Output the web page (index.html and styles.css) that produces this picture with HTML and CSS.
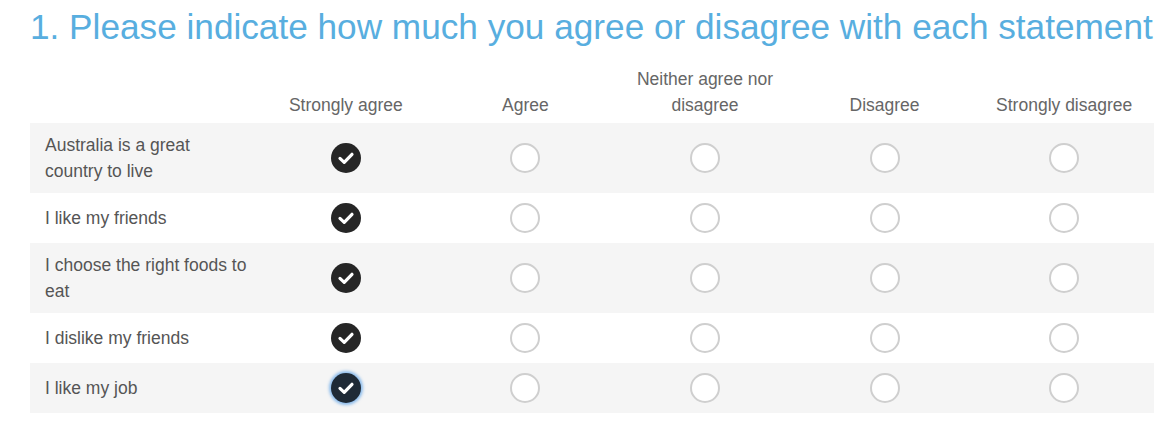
FILE: index.html
```html
<!DOCTYPE html>
<html>
<head>
<meta charset="utf-8">
<link rel="stylesheet" href="styles.css">
</head>
<body>
<div class="page">
  <h1 class="title">1. Please indicate how much you agree or disagree with each statement</h1>
  <table class="matrix">
    <colgroup>
      <col class="col-label">
      <col><col><col><col><col>
    </colgroup>
    <thead>
      <tr>
        <th></th>
        <th>Strongly agree</th>
        <th>Agree</th>
        <th>Neither agree nor disagree</th>
        <th>Disagree</th>
        <th>Strongly disagree</th>
      </tr>
    </thead>
    <tbody>
      <tr class="alt">
        <td class="label">Australia is a great country to live</td>
        <td><span class="radio checked"><svg viewBox="0 0 30 30"><path d="M9 15.4l4.2 3.9 7.8-8"/></svg></span></td>
        <td><span class="radio"></span></td>
        <td><span class="radio"></span></td>
        <td><span class="radio"></span></td>
        <td><span class="radio"></span></td>
      </tr>
      <tr>
        <td class="label">I like my friends</td>
        <td><span class="radio checked"><svg viewBox="0 0 30 30"><path d="M9 15.4l4.2 3.9 7.8-8"/></svg></span></td>
        <td><span class="radio"></span></td>
        <td><span class="radio"></span></td>
        <td><span class="radio"></span></td>
        <td><span class="radio"></span></td>
      </tr>
      <tr class="alt">
        <td class="label">I choose the right foods to eat</td>
        <td><span class="radio checked"><svg viewBox="0 0 30 30"><path d="M9 15.4l4.2 3.9 7.8-8"/></svg></span></td>
        <td><span class="radio"></span></td>
        <td><span class="radio"></span></td>
        <td><span class="radio"></span></td>
        <td><span class="radio"></span></td>
      </tr>
      <tr>
        <td class="label">I dislike my friends</td>
        <td><span class="radio checked"><svg viewBox="0 0 30 30"><path d="M9 15.4l4.2 3.9 7.8-8"/></svg></span></td>
        <td><span class="radio"></span></td>
        <td><span class="radio"></span></td>
        <td><span class="radio"></span></td>
        <td><span class="radio"></span></td>
      </tr>
      <tr class="alt">
        <td class="label">I like my job</td>
        <td><span class="radio checked focused"><svg viewBox="0 0 30 30"><path d="M9 15.4l4.2 3.9 7.8-8"/></svg></span></td>
        <td><span class="radio"></span></td>
        <td><span class="radio"></span></td>
        <td><span class="radio"></span></td>
        <td><span class="radio"></span></td>
      </tr>
    </tbody>
  </table>
</div>
</body>
</html>
```

FILE: styles.css
```css
html, body {
  margin: 0;
  padding: 0;
  background: #ffffff;
}

body {
  font-family: "Liberation Sans", Arial, sans-serif;
}

.page {
  padding: 0 14px 0 30px;
}

.title {
  margin: 6px 0 0 0;
  font-size: 35.2px;
  line-height: 41px;
  font-weight: normal;
  color: #58aedf;
  white-space: nowrap;
}

.matrix {
  width: 1124px;
  table-layout: fixed;
  border-collapse: collapse;
  border-spacing: 0;
}

.col-label {
  width: 226px;
}

.matrix th {
  font-weight: normal;
  font-size: 17.5px;
  line-height: 26px;
  color: #666666;
  text-align: center;
  vertical-align: bottom;
  padding: 19px 12px 5px;
}

.matrix td {
  padding: 10px 0;
  text-align: center;
  vertical-align: middle;
  height: 30px;
}

.matrix td.label {
  text-align: left;
  padding: 9px 7px 9px 15px;
  font-size: 17.5px;
  line-height: 26px;
  color: #555555;
}

.matrix tr.alt td {
  background: #f5f5f5;
}

.radio {
  display: inline-block;
  box-sizing: border-box;
  width: 30px;
  height: 30px;
  border-radius: 50%;
  border: 2px solid #cfcfcf;
  background: #ffffff;
  vertical-align: middle;
}

.radio.checked {
  border: none;
  background: #262626;
}

.radio.checked svg {
  display: block;
  width: 30px;
  height: 30px;
}

.radio.checked path {
  fill: none;
  stroke: #ffffff;
  stroke-width: 3.2;
  stroke-linecap: round;
  stroke-linejoin: round;
}

.radio.focused {
  background: #1f2a36;
  box-shadow: 0 0 3px 2px rgba(70, 150, 230, 0.6);
}
```
